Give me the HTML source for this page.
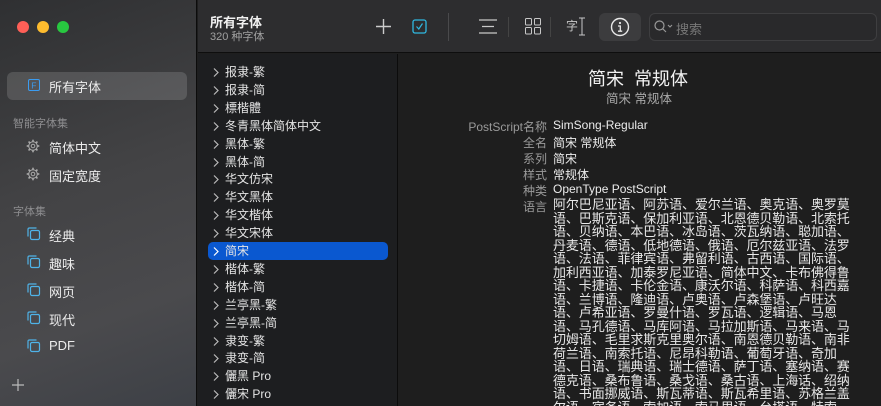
<!DOCTYPE html>
<html><head><meta charset="utf-8"><style>
*{margin:0;padding:0;box-sizing:border-box}
html,body{width:881px;height:406px;overflow:hidden}
body{background:#1e1e1e;font-family:"Liberation Sans","Noto Sans CJK SC",sans-serif;color:#e6e6e6;position:relative}
.abs{position:absolute;white-space:nowrap}
#side{position:absolute;left:0;top:0;width:197px;height:406px;background:linear-gradient(160deg,#2f3032 0%,#434345 45%,#4a4a4d 75%,#3d4046 100%);border-right:1px solid #0c0c0c}
.dot{position:absolute;top:21px;width:12px;height:12px;border-radius:50%}
.sel{position:absolute;left:7px;top:72px;width:180px;height:28px;border-radius:6px;background:rgba(255,255,255,0.14)}
.hd{font-size:11px;color:#8d8d8f}
.it{font-size:13px;color:#ececec}
#tb{position:absolute;left:198px;top:0;width:683px;height:53px;background:#2d2d2f;border-bottom:1px solid #0e0e0e}
#list{position:absolute;left:198px;top:54px;width:200px;height:352px;background:#1d1e20;border-right:1px solid #0c0c0c}
.row{position:absolute;left:27px;font-size:12px;color:#e4e4e4;height:18px;line-height:18px}
.chev{position:absolute;left:15px}
.lb{position:absolute;right:334px;font-size:12px;color:#9a9a9a;white-space:nowrap}
.vl{position:absolute;left:553px;font-size:12px;color:#ececec;white-space:nowrap}
#lang{position:absolute;left:553px;top:198px;font-size:13px;line-height:13.5px;color:#e8e8e8;white-space:pre;letter-spacing:-0.1px}
</style></head><body>
<div id="side">
<div class="dot" style="left:17px;background:#fe5f57"></div>
<div class="dot" style="left:37px;background:#febc2e"></div>
<div class="dot" style="left:57px;background:#28c840"></div>
<div class="sel"></div>
<svg class="abs" style="left:28px;top:79px" width="13" height="13"><rect x="0.5" y="0.5" width="11" height="11" rx="1.5" fill="none" stroke="#3b9cf0"/><text x="3.3" y="9.5" font-size="8.5" fill="#3b9cf0" font-family="Liberation Sans">F</text></svg>
<div class="abs it" style="left:49px;top:77px">所有字体</div>
<div class="abs hd" style="left:13px;top:115px">智能字体集</div>
<div id="gears"></div>
<div class="abs it" style="left:49px;top:138px">简体中文</div>
<div class="abs it" style="left:49px;top:166px">固定宽度</div>
<div class="abs hd" style="left:13px;top:203px">字体集</div>
<div id="colls"></div>
<svg class="abs" style="left:12px;top:379px" width="12" height="12"><path d="M6 0V12M0 6H12" stroke="#bbb" stroke-width="1.2"/></svg>
</div>
<div id="tb">
<div class="abs" style="left:12px;top:12px;font-size:13px;font-weight:bold;color:#f0f0f0">所有字体</div>
<div class="abs" style="left:12px;top:28px;font-size:11px;color:#a0a0a0">320 种字体</div>
<svg class="abs" style="left:178px;top:19px" width="15" height="15"><path d="M7.5 0V15M0 7.5H15" stroke="#ccc" stroke-width="1.4"/></svg>
<svg class="abs" style="left:214px;top:19px" width="16" height="16"><rect x="1" y="1" width="13" height="13" rx="2" fill="none" stroke="#2fb8e0" stroke-width="1.3"/><path d="M4.5 7.5L6.8 10L10.5 4.5" fill="none" stroke="#2fb8e0" stroke-width="1.2"/></svg>
<div class="abs" style="left:250px;top:13px;width:1px;height:28px;background:#4a4a4c"></div>
<svg class="abs" style="left:281px;top:19px" width="18" height="15"><path d="M0 1H18M3 7.5H15M0 14H18" stroke="#c8c8c8" stroke-width="1.2"/></svg>
<div class="abs" style="left:310px;top:17px;width:1px;height:20px;background:#444"></div>
<svg class="abs" style="left:327px;top:18px" width="16" height="17"><rect x="0.5" y="0.5" width="6" height="6.5" rx="1" fill="none" stroke="#c8c8c8"/><rect x="9.5" y="0.5" width="6" height="6.5" rx="1" fill="none" stroke="#c8c8c8"/><rect x="0.5" y="9.5" width="6" height="6.5" rx="1" fill="none" stroke="#c8c8c8"/><rect x="9.5" y="9.5" width="6" height="6.5" rx="1" fill="none" stroke="#c8c8c8"/></svg>
<div class="abs" style="left:352px;top:17px;width:1px;height:20px;background:#444"></div>
<div class="abs" style="left:368px;top:17px;font-size:12px;color:#c8c8c8">字</div>
<svg class="abs" style="left:381px;top:17px" width="6" height="19"><path d="M0 1H6M3 1V18M0 18H6" stroke="#c8c8c8" stroke-width="1"/></svg>
<div class="abs" style="left:401px;top:13px;width:42px;height:28px;border-radius:6px;background:#3c3c3e"></div>
<svg class="abs" style="left:412px;top:17px" width="20" height="20"><circle cx="10" cy="10" r="8.5" fill="none" stroke="#e8e8e8" stroke-width="1.4"/><circle cx="10" cy="6" r="1.1" fill="#e8e8e8"/><path d="M8 9H10.3V14M8 14.2H12.2" fill="none" stroke="#e8e8e8" stroke-width="1.3"/></svg>
<div class="abs" style="left:451px;top:13px;width:228px;height:28px;border-radius:6px;border:1px solid #3e3e40;background:#29292b"></div>
<svg class="abs" style="left:456px;top:20px" width="20" height="14"><circle cx="5.5" cy="5.5" r="4.5" fill="none" stroke="#999" stroke-width="1.2"/><path d="M8.8 8.8L12 12M14 5L16 7L18 5" fill="none" stroke="#999" stroke-width="1.1"/></svg>
<div class="abs" style="left:478px;top:19px;font-size:13px;color:#777">搜索</div>
</div>
<div id="list"></div>
<div class="abs" style="left:588px;top:65px;font-size:18px;color:#f2f2f2">简宋&nbsp;&nbsp;常规体</div>
<div class="abs" style="left:606px;top:88px;font-size:12.5px;color:#a8a8a8">简宋 常规体</div>
<div class="lb" style="top:118px">PostScript名称</div><div class="vl" style="top:118px">SimSong-Regular</div>
<div class="lb" style="top:134px">全名</div><div class="vl" style="top:134px">简宋 常规体</div>
<div class="lb" style="top:150px">系列</div><div class="vl" style="top:150px">简宋</div>
<div class="lb" style="top:166px">样式</div><div class="vl" style="top:166px">常规体</div>
<div class="lb" style="top:182px">种类</div><div class="vl" style="top:182px">OpenType PostScript</div>
<div class="lb" style="top:198px">语言</div>
<div id="lang">阿尔巴尼亚语、阿苏语、爱尔兰语、奥克语、奥罗莫
语、巴斯克语、保加利亚语、北恩德贝勒语、北索托
语、贝纳语、本巴语、冰岛语、茨瓦纳语、聪加语、
丹麦语、德语、低地德语、俄语、厄尔兹亚语、法罗
语、法语、菲律宾语、弗留利语、古西语、国际语、
加利西亚语、加泰罗尼亚语、简体中文、卡布佛得鲁
语、卡捷语、卡伦金语、康沃尔语、科萨语、科西嘉
语、兰博语、隆迪语、卢奥语、卢森堡语、卢旺达
语、卢希亚语、罗曼什语、罗瓦语、逻辑语、马恩
语、马孔德语、马库阿语、马拉加斯语、马来语、马
切姆语、毛里求斯克里奥尔语、南恩德贝勒语、南非
荷兰语、南索托语、尼昂科勒语、葡萄牙语、奇加
语、日语、瑞典语、瑞士德语、萨丁语、塞纳语、赛
德克语、桑布鲁语、桑戈语、桑古语、上海话、绍纳
语、书面挪威语、斯瓦蒂语、斯瓦希里语、苏格兰盖
尔语、宿务语、索加语、索马里语、台塔语、特索</div>
<script>
var items=["报隶-繁","报隶-简","標楷體","冬青黑体简体中文","黑体-繁","黑体-简","华文仿宋","华文黑体","华文楷体","华文宋体","简宋","楷体-繁","楷体-简","兰亭黑-繁","兰亭黑-简","隶变-繁","隶变-简","儷黑 Pro","儷宋 Pro"];
var h="";items.forEach(function(t,i){var y=9+i*17.9;
if(i==10)h+='<div style="position:absolute;left:10px;top:'+(y)+'px;width:180px;height:18px;border-radius:5px;background:#0a58d0"></div>';
h+='<svg class="chev" style="top:'+(y+5)+'px" width="6" height="9"><path d="M1 0.5L5 4.5L1 8.5" fill="none" stroke="'+(i==10?'#fff':'#bbb')+'" stroke-width="1.2"/></svg><div class="row" style="top:'+y+'px">'+t+'</div>';});
document.getElementById("list").innerHTML=h;
var c=["经典","趣味","网页","现代","PDF"],s="";c.forEach(function(t,i){var y=226+i*28;
s+='<svg class="abs" style="left:27px;top:'+(y+1)+'px" width="14" height="14"><path d="M1 9.5V2.5Q1 1 2.5 1H9.5" fill="none" stroke="#4fb3e8" stroke-width="1.2"/><rect x="3.5" y="3.5" width="9" height="9" rx="1.5" fill="none" stroke="#4fb3e8" stroke-width="1.2"/></svg><div class="abs it" style="left:49px;top:'+y+'px">'+t+'</div>';});
document.getElementById("colls").innerHTML=s;
var g="";[146,174].forEach(function(cy){var p="";for(var k=0;k<8;k++){var a=k*Math.PI/4;p+='<line x1="'+(7+4.5*Math.cos(a))+'" y1="'+(7+4.5*Math.sin(a))+'" x2="'+(7+6.3*Math.cos(a))+'" y2="'+(7+6.3*Math.sin(a))+'" stroke="#aaa" stroke-width="1.6"/>';}
g+='<svg class="abs" style="left:26px;top:'+(cy-7)+'px" width="14" height="14"><circle cx="7" cy="7" r="4.3" fill="none" stroke="#aaa" stroke-width="1"/><circle cx="7" cy="7" r="1.8" fill="none" stroke="#aaa" stroke-width="1"/>'+p+'</svg>';});
document.getElementById("gears").innerHTML=g;
</script>
</body></html>
